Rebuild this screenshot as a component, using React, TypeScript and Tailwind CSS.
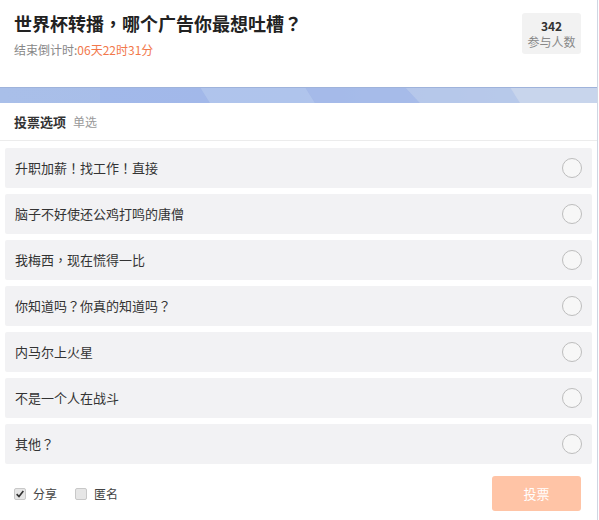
import React from "react";

const options = [
  "升职加薪！找工作！直接",
  "脑子不好使还公鸡打鸣的唐僧",
  "我梅西，现在慌得一比",
  "你知道吗？你真的知道吗？",
  "内马尔上火星",
  "不是一个人在战斗",
  "其他？",
];

// full-width punctuation sits centred in the reference, like the TC cut
function Txt({ s }: { s: string }) {
  return (
    <>
      {s.split(/([，！？])/).map((p, i) =>
        /[，！？]/.test(p) ? (
          <span key={i} style={{ fontFamily: '"Noto Sans CJK TC", sans-serif' }}>
            {p}
          </span>
        ) : (
          p
        )
      )}
    </>
  );
}

function Band() {
  return (
    <svg className="block h-4 w-full" viewBox="0 0 597 16" preserveAspectRatio="none">
      <defs>
        <linearGradient id="bg" x1="0" x2="1" y1="0" y2="0">
          <stop offset="0" stopColor="#a9bfe9" />
          <stop offset="0.5" stopColor="#a7bce8" />
          <stop offset="1" stopColor="#c3d1ec" />
        </linearGradient>
      </defs>
      <rect width="597" height="16" fill="url(#bg)" />
      <polygon points="100,0 200,0 210,16 100,16" fill="#9fb6ea" opacity="0.7" />
      <polygon points="200,0 305,0 315,16 210,16" fill="#b2c6ec" opacity="0.8" />
      <polygon points="305,0 405,0 420,16 315,16" fill="#a4b9e8" opacity="0.8" />
      <polygon points="405,0 510,0 520,16 420,16" fill="#b6c8ea" opacity="0.8" />
      <polygon points="510,0 597,0 597,16 520,16" fill="#c8d5ec" />
      <rect width="597" height="1" fill="#9fb3db" />
    </svg>
  );
}

function Checkbox({ checked }: { checked?: boolean }) {
  return (
    <span className="flex h-[12px] w-[12px] items-center justify-center rounded-[2px] border border-[#c8c8c8] bg-[#e6e6e6]">
      {checked && (
        <svg viewBox="0 0 12 12" className="h-[10px] w-[10px]">
          <path d="M2 6.2 L4.8 9 L10 2.5" fill="none" stroke="#333" strokeWidth="2" />
        </svg>
      )}
    </span>
  );
}

export default function App() {
  return (
    <div
      className="h-[520px] w-[598px] border-r border-[#cfd6e3] bg-white text-[#333]"
      style={{ fontFamily: '"Microsoft YaHei", "Noto Sans CJK SC", sans-serif' }}
    >
      <div className="flex h-[87px] items-start justify-between pl-[14px] pr-[16px] pt-[9px]">
        <div>
          <h1 className="text-[18px] font-bold leading-[28px] text-[#222]">
            <Txt s="世界杯转播，哪个广告你最想吐槽？" />
          </h1>
          <p className="mt-[5px] text-[12px] leading-[16px] text-[#888]">
            结束倒计时:<span className="text-[#f2784b]">06天22时31分</span>
          </p>
        </div>
        <div className="mt-[4px] flex h-[41px] w-[59px] flex-col items-center justify-center rounded-[3px] bg-[#f2f2f2]">
          <span className="text-[12px] font-bold leading-[16px] text-[#333]">342</span>
          <span className="text-[12px] leading-[16px] text-[#888]">参与人数</span>
        </div>
      </div>

      <Band />

      <div className="flex h-[38px] items-center gap-[7px] border-b border-[#ececec] pl-[14px]">
        <span className="text-[13px] font-bold text-[#333]">投票选项</span>
        <span className="text-[12px] text-[#999]">单选</span>
      </div>

      <div className="flex flex-col gap-[6px] px-[5px] pt-[7px]">
        {options.map((o) => (
          <div
            key={o}
            className="flex h-[40px] items-center justify-between rounded-[2px] bg-[#f2f2f4] pl-[10px] pr-[10px]"
          >
            <span className="text-[13px] text-[#333]">
              <Txt s={o} />
            </span>
            <span className="h-[20px] w-[20px] rounded-full border border-[#bdbdbd] bg-[#f7f7f7]" />
          </div>
        ))}
      </div>

      <div className="flex items-center justify-between pl-[14px] pr-[16px] pt-[12px]">
        <div className="flex items-center text-[12px] text-[#444]">
          <Checkbox checked />
          <span className="ml-[7px]">分享</span>
          <span className="ml-[18px]">
            <Checkbox />
          </span>
          <span className="ml-[7px]">匿名</span>
        </div>
        <button className="h-[35px] w-[89px] rounded-[3px] bg-[#ffc4a6] text-[13px] text-white">
          投票
        </button>
      </div>
    </div>
  );
}
